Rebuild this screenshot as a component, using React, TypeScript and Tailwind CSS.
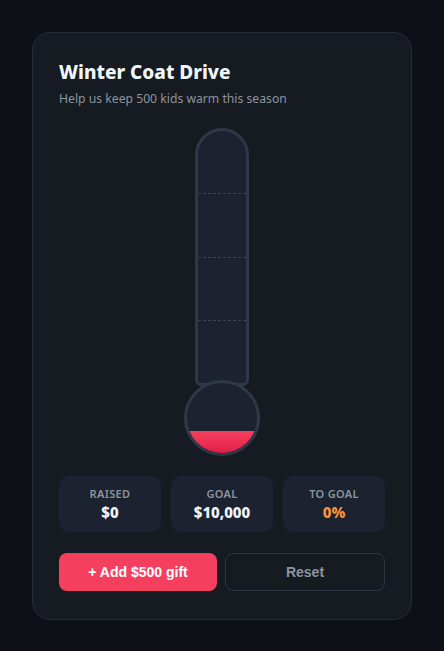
import { useState } from 'react'

const GOAL = 10000
const STEP = 500

export default function App() {
  const [raised, setRaised] = useState(0)

  const pct = Math.min(100, Math.round((raised / GOAL) * 100))

  const addGift = () => setRaised(r => Math.min(GOAL, r + STEP))
  const reset = () => setRaised(0)

  return (
    <div className="min-h-screen bg-[#0d1117] p-8" style={{ fontFamily: '"Noto Sans", "Open Sans", sans-serif' }}>
      <div className="rounded-[18px] border border-[#262c36] bg-[#161b22] px-[26px] pt-[26px] pb-[28px]">
        <h1 className="text-[19px] font-extrabold leading-[26px] text-[#f0f6fc]">Winter Coat Drive</h1>
        <p className="mt-1 text-[12.2px] leading-5 text-[#8b949e]">Help us keep 500 kids warm this season</p>

        <div className="mt-[19px] flex flex-col items-center">
          {/* tube */}
          <div className="relative flex h-[258px] w-[54px] flex-col overflow-hidden rounded-t-[27px] rounded-b-[6px] border-[3px] border-[#2f3847] bg-[#1c2230]">
            <div
              className="absolute bottom-0 left-0 right-0 bg-gradient-to-b from-[#f43f5e] to-[#e11d48]"
              style={{ height: `${pct}%` }}
            />
            <div className="flex-1" />
            <div className="flex-1 border-t border-dashed border-[#3a4453]" />
            <div className="flex-1 border-t border-dashed border-[#3a4453]" />
            <div className="flex-1 border-t border-dashed border-[#3a4453]" />
          </div>
          {/* bulb */}
          <div className="relative z-10 -mt-[6px] flex h-[76px] w-[76px] flex-col justify-end overflow-hidden rounded-full border-[3px] border-[#2f3847] bg-[#1c2230]">
            <div className="h-[22px] bg-gradient-to-b from-[#f43f5e] to-[#e11d48]" />
          </div>
        </div>

        <div className="mt-[20px] grid grid-cols-3 gap-[10px]">
          <Stat label="RAISED" value={`$${raised.toLocaleString('en-US')}`} />
          <Stat label="GOAL" value={`$${GOAL.toLocaleString('en-US')}`} />
          <Stat label="TO GOAL" value={`${pct}%`} accent />
        </div>

        <div className="mt-[21px] flex gap-2" style={{ fontFamily: '"Liberation Sans", Arial, sans-serif' }}>
          <button
            onClick={addGift}
            className="h-[38px] flex-1 rounded-lg bg-[#f43f5e] text-[14px] font-bold text-white"
          >
            + Add $500 gift
          </button>
          <button
            onClick={reset}
            className="h-[38px] flex-1 rounded-lg border border-[#2f3641] bg-transparent text-[14px] font-bold text-[#8b949e]"
          >
            Reset
          </button>
        </div>
      </div>
    </div>
  )
}

function Stat({ label, value, accent }: { label: string; value: string; accent?: boolean }) {
  return (
    <div className="flex h-[56px] flex-col items-center justify-center rounded-[10px] bg-[#1c2230]">
      <div className="text-[11px] font-semibold leading-4 tracking-[0.03em] text-[#8b949e]">{label}</div>
      <div className={`text-[15px] font-extrabold leading-5 ${accent ? 'text-[#fb923c]' : 'text-[#f0f6fc]'}`}>{value}</div>
    </div>
  )
}
